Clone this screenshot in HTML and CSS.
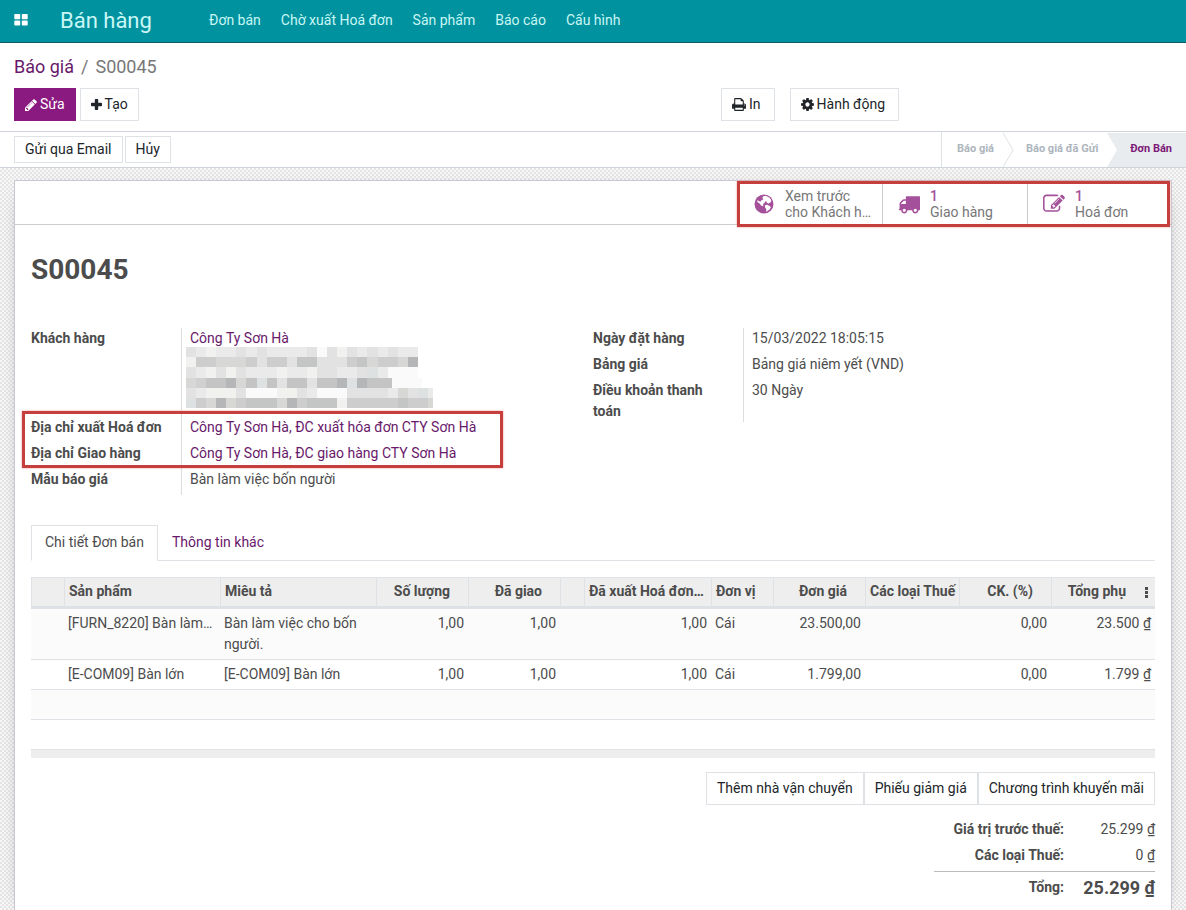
FILE: index.html
```html
<!DOCTYPE html>
<html lang="vi">
<head>
<meta charset="utf-8">
<title>S00045 - Bán hàng</title>
<link rel="stylesheet" href="styles.css">
</head>
<body>
<header class="navbar">
  <button class="apps" aria-label="Ứng dụng"><svg width="14" height="12" viewBox="0 0 14 12"><path fill="currentColor" d="M1 0h4.500a.7.700 0 0 1 .7.700v3.900a.7.700 0 0 1-.7.700H1a.7.700 0 0 1-.7-.7V.7A.7.700 0 0 1 1 0zm7.800 0h4.200a.7.700 0 0 1 .7.700v3.900a.7.700 0 0 1-.7.700H8.500a.7.700 0 0 1-.7-.7V.7a.7.700 0 0 1 .7-.7zM1 6.500h4.500a.7.700 0 0 1 .7.700v3.600a.7.700 0 0 1-.7.700H1a.7.700 0 0 1-.7-.7V7.200a.7.700 0 0 1 .7-.7zm7.800 0h4.200a.7.700 0 0 1 .7.700v3.600a.7.700 0 0 1-.7.700H8.500a.7.700 0 0 1-.7-.7V7.200a.7.700 0 0 1 .7-.7z"/></svg></button>
  <a class="brand" href="#">Bán hàng</a>
  <nav class="menu">
    <a href="#">Đơn bán</a><a href="#">Chờ xuất Hoá đơn</a><a href="#">Sản phẩm</a><a href="#">Báo cáo</a><a href="#">Cấu hình</a>
  </nav>
</header>
<section class="control-panel">
  <nav class="breadcrumb"><a href="#">Báo giá</a><span>/</span><span>S00045</span></nav>
  <div class="actions">
    <div class="actions-left">
      <button class="btn primary"><svg class="icon" width="12" height="14" viewBox="0 0 1536 1792"><path fill="currentColor" transform="matrix(1 0 0 -1 0 1536)" d="M363 0l91 91l-235 235l-91 -91v-107h128v-128h107zM886 928q0 22 -22 22q-10 0 -17 -7l-542 -542q-7 -7 -7 -17q0 -22 22 -22q10 0 17 7l542 542q7 7 7 17zM832 1120l416 -416l-832 -832h-416v416zM1515 1024q0 -53 -37 -90l-166 -166l-416 416l166 165q36 38 90 38q53 0 91 -38l235 -234q37 -39 37 -91z"/></svg>Sửa</button>
      <button class="btn"><svg class="icon" width="11" height="11" viewBox="0 0 11 11"><path fill="currentColor" d="M4.600 0h1.800q.8 0 .8.800v3h3q.8 0 .8.800v1.800q0 .8-.8.800h-3v3q0 .8-.8.800H4.600q-.8 0-.8-.8v-3h-3Q0 7.200 0 6.400V4.600q0-.8.800-.8h3v-3q0-.8.800-.8z"/></svg>Tạo</button>
    </div>
    <div class="actions-right">
      <button class="btn menu-btn"><svg class="icon" width="14" height="15" viewBox="0 0 1664 1792"><path fill="currentColor" transform="matrix(1 0 0 -1 0 1536)" d="M384 0h896v256h-896v-256zM384 640h896v384h-160q-40 0 -68 28t-28 68v160h-640v-640zM1536 576q0 26 -19 45t-45 19t-45 -19t-19 -45t19 -45t45 -19t45 19t19 45zM1664 576v-416q0 -13 -9.500 -22.500t-22.500 -9.500h-224v-160q0 -40 -28 -68t-68 -28h-960q-40 0 -68 28t-28 68v160h-224q-13 0 -22.500 9.500t-9.500 22.500v416q0 79 56.500 135.500t135.500 56.500h64v544q0 40 28 68t68 28h672q40 0 88 -20t76 -48l152 -152q28 -28 48 -76t20 -88v-256h64q79 0 135.500 -56.500t56.500 -135.500z"/></svg>In</button>
      <button class="btn menu-btn"><svg class="icon" width="13" height="15" viewBox="0 0 1536 1792"><path fill="currentColor" transform="matrix(1 0 0 -1 0 1536)" d="M1024 640q0 106 -75 181t-181 75t-181 -75t-75 -181t75 -181t181 -75t181 75t75 181zM1536 749v-222q0 -12 -8 -23t-20 -13l-185 -28q-19 -54 -39 -91q35 -50 107 -138q10 -12 10 -25t-9 -23q-27 -37 -99 -108t-94 -71q-12 0 -26 9l-138 108q-44 -23 -91 -38q-16 -136 -29 -186q-7 -28 -36 -28h-222q-14 0 -24.500 8.500t-11.500 21.500l-28 184q-49 16 -90 37l-141 -107q-10 -9 -25 -9q-14 0 -25 11q-126 114 -165 168q-7 10 -7 23q0 12 8 23q15 21 51 66.500t54 70.500q-27 50 -41 99l-183 27q-13 2 -21 12.500t-8 23.500v222q0 12 8 23t19 13l186 28q14 46 39 92q-40 57 -107 138q-10 12 -10 24q0 10 9 23q26 36 98.500 107.500t94.500 71.500q13 0 26 -10l138 -107q44 23 91 38q16 136 29 186q7 28 36 28h222q14 0 24.500 -8.500t11.500 -21.500l28 -184q49 -16 90 -37l142 107q9 9 24 9q13 0 25 -10q129 -119 165 -170q7 -8 7 -22q0 -12 -8 -23q-15 -21 -51 -66.500t-54 -70.500q26 -50 41 -98l183 -28q13 -2 21 -12.500t8 -23.500z"/></svg>Hành động</button>
    </div>
  </div>
</section>
<section class="statusbar">
  <div class="status-buttons"><button class="btn small">Gửi qua Email</button><button class="btn small">Hủy</button></div>
  <div class="stages">
    <button class="stage first">Báo giá</button>
    <svg width="12" height="34" viewBox="0 0 12 34"><path d="M1 0l10 17L1 34" fill="none" stroke="#dee2e6"/></svg>
    <button class="stage">Báo giá đã Gửi</button>
    <svg width="12" height="34" viewBox="0 0 12 34"><path d="M0 0h12v34H0l10-17z" fill="#e9ecef"/></svg>
    <button class="stage active">Đơn Bán</button>
  </div>
</section>
<main class="backdrop">
  <article class="sheet">
    <div class="button-box">
      <div class="stat-group">
        <button class="stat"><svg width="22" height="22" viewBox="0 0 22 22"><circle cx="11" cy="11" r="9.500" fill="currentColor"/><path fill="#fff" d="M9.800 3.400l3-.6 3.800 1.900 1.700 2.600-.6 1.900-2 1.400-1.600-.6-.9-1.700-1.300.5-.5 1.500-1.500.8.600 1.300-1 .8-1.600-.9-1.300-1.900L4.300 9l.3-2 1.500 1.300 1.600.3 1-1.500 1.700-.7-.9-1.500zM12 12.300l2-.5 2.700 1.300 1.200 1.200-1.300 2.200-1.900 1.300-1 1-.6-.3.300-2.200-1.300-1.800z"/></svg><span class="stat-text"><span>Xem trước</span><span>cho Khách h…</span></span></button>
        <button class="stat"><svg width="22" height="22" viewBox="0 0 1792 1792"><path fill="currentColor" fill-rule="evenodd" d="M640 1408q0-52-38-90t-90-38-90 38-38 90 38 90 90 38 90-38 38-90zM256 896h384V640H482q-13 0-22 9L265 844q-9 9-9 22zM1536 1408q0-52-38-90t-90-38-90 38-38 90 38 90 90 38 90-38 38-90zM1792 320v1024q0 15-4 26.500t-13.500 18.500-16.500 11.500-23.500 6-22.500 2-25.500 0-22.500-.5q0 106-75 181t-181 75-181-75-75-181H768q0 106-75 181t-181 75-181-75-75-181h-64q-3 0-22.500.5t-25.500 0-22.500-2-23.500-6-16.500-11.500-13.500-18.500-4-26.500q0-26 19-45t45-19V960q0-8-.5-35t0-38 2.500-34.500 6.500-37 14-30.500 22.500-30l198-198q19-19 50.500-32t58.500-13h160V320q0-26 19-45t45-19h1024q26 0 45 19t19 45z"/></svg><span class="stat-text"><span class="count">1</span><span>Giao hàng</span></span></button>
        <button class="stat"><svg width="22" height="22" viewBox="0 0 1792 1792"><path fill="currentColor" transform="matrix(1 0 0 -1 0 1536)" d="M888 352l116 116l-152 152l-116 -116v-56h96v-96h56zM1328 1072q-16 16 -33 -1l-350 -350q-17 -17 -1 -33t33 1l350 350q17 17 1 33zM1408 478v-190q0 -119 -84.500 -203.500t-203.500 -84.500h-832q-119 0 -203.500 84.500t-84.500 203.500v832q0 119 84.500 203.500t203.500 84.500h832q63 0 117 -25q15 -7 18 -23q3 -17 -9 -29l-49 -49q-14 -14 -32 -8q-23 6 -45 6h-832q-66 0 -113 -47t-47 -113v-832q0 -66 47 -113t113 -47h832q66 0 113 47t47 113v126q0 13 9 22l64 64q15 15 35 7t20 -29zM1312 1216l288 -288l-672 -672h-288v288zM1756 1084l-92 -92l-288 288l92 92q28 28 68 28t68 -28l152 -152q28 -28 28 -68t-28 -68z"/></svg><span class="stat-text"><span class="count">1</span><span>Hoá đơn</span></span></button>
      </div>
    </div>
    <div class="sheet-body">
      <h1 class="title">S00045</h1>
      <div class="groups">
        <dl class="fields">
          <dt>Khách hàng</dt><dd><a href="#">Công Ty Sơn Hà</a>
            <svg class="mosaic" width="247" height="61" viewBox="0 0 24.500 6" preserveAspectRatio="none" shape-rendering="crispEdges" aria-hidden="true">
              <path fill="#eaeaea" d="M0 0h23v1H0zM0 2h20v1H0zM0 4h24.500v1H0z"/>
              <path fill="#cdcdcd" d="M0 1h23v1H0zM0 5h24.500v1H0z"/>
              <path fill="#c4c4c4" d="M0 3h20.400v1H0z"/>
              <path stroke="#fafafa" d="M13 .5h1M20 2.500h3M20.400 3.500h3M6 4.500h3M13 4.500h3"/>
              <path stroke="#f1f1f0" d="M2 .5h1M15 .5h1M0 1.500h1M2 2.500h1M4 2.500h1M9 2.500h1M12 2.500h1M2 4.500h3M9 4.500h2M15 5.500h1"/>
              <path stroke="#e2e2e2" d="M0 .5h1M5 .5h1M7 .5h1M12 .5h1M14 .5h1M16 .5h1M18 .5h1M20 .5h1M7 1.500h1M10 1.500h1M13 1.500h3M0 2.500h1M3 2.500h1M5 2.500h1M13 2.500h2M17 2.500h1M9 3.500h1M12 3.500h1M0 4.500h1M5 4.500h1M11 4.500h1M16 4.500h4M22 4.500h1"/>
              <path stroke="#dde1e2" d="M18 2.500h1M7 3.500h1M16 3.500h1M0 5.500h1M23 4.500h1"/>
              <path stroke="#d7d7d6" d="M3 1.500h3M18 1.500h1M21 1.500h1M0 3.500h1M5 3.500h1M21 4.500h1M2 5.500h1M4 5.500h1M9 5.500h1M24 5.500h.5"/>
              <path stroke="#d0d0d0" d="M1 3.500h1"/>
              <path stroke="#c4c6c6" d="M11 1.500h2M17 1.500h1M6 5.500h3M12 5.500h3M21 5.500h1"/>
              <path stroke="#b5b6b7" d="M22 1.500h1M4 3.500h1M15 3.500h1M17 3.500h1M3 5.500h1M10 5.500h1"/>
            </svg></dd>
          <dt>Địa chỉ xuất Hoá đơn</dt><dd><a href="#">Công Ty Sơn Hà, ĐC xuất hóa đơn CTY Sơn Hà</a></dd>
          <dt>Địa chỉ Giao hàng</dt><dd><a href="#">Công Ty Sơn Hà, ĐC giao hàng CTY Sơn Hà</a></dd>
          <dt>Mẫu báo giá</dt><dd>Bàn làm việc bốn người</dd>
          <dd class="highlight" aria-hidden="true"></dd>
        </dl>
        <dl class="fields compact">
          <dt>Ngày đặt hàng</dt><dd>15/03/2022 18:05:15</dd>
          <dt>Bảng giá</dt><dd>Bảng giá niêm yết (VND)</dd>
          <dt>Điều khoản thanh toán</dt><dd>30 Ngày</dd>
        </dl>
      </div>
      <div class="tabs"><button class="tab active">Chi tiết Đơn bán</button><button class="tab">Thông tin khác</button></div>
      <table class="lines">
        <colgroup><col class="w33"><col class="w156"><col class="w156"><col class="w92"><col class="w92"><col class="w24"><col class="w127"><col class="w62"><col class="w92"><col class="w94"><col class="w92"><col class="w88"><col class="w16"></colgroup>
        <thead><tr><th></th><th>Sản phẩm</th><th>Miêu tả</th><th class="num">Số lượng</th><th class="num">Đã giao</th><th></th><th>Đã xuất Hoá đơn…</th><th>Đơn vị</th><th class="num">Đơn giá</th><th>Các loại Thuế</th><th class="num">CK. (%)</th><th class="num last">Tổng phụ</th><th class="more"><button aria-label="Tùy chọn cột"><svg width="4" height="11" viewBox="0 0 4 11"><path fill="currentColor" d="M0 0h3v3H0zM0 4h3v3H0zM0 8h3v3H0z"/></svg></button></th></tr></thead>
        <tbody>
          <tr><td></td><td class="clip">[FURN_8220] Bàn làm…</td><td>Bàn làm việc cho bốn người.</td><td class="num">1,00</td><td class="num">1,00</td><td></td><td class="num">1,00</td><td>Cái</td><td class="num">23.500,00</td><td></td><td class="num">0,00</td><td class="num" colspan="2">23.500 ₫</td></tr>
          <tr><td></td><td class="clip">[E-COM09] Bàn lớn</td><td>[E-COM09] Bàn lớn</td><td class="num">1,00</td><td class="num">1,00</td><td></td><td class="num">1,00</td><td>Cái</td><td class="num">1.799,00</td><td></td><td class="num">0,00</td><td class="num" colspan="2">1.799 ₫</td></tr>
          <tr><td colspan="13">&nbsp;</td></tr>
          <tr><td colspan="13">&nbsp;</td></tr>
        </tbody>
        <tfoot><tr><td colspan="13"></td></tr></tfoot>
      </table>
      <div class="extra"><button class="btn">Thêm nhà vận chuyển</button><button class="btn">Phiếu giảm giá</button><button class="btn">Chương trình khuyến mãi</button></div>
      <table class="totals">
        <tr><th scope="row">Giá trị trước thuế:</th><td>25.299 ₫</td></tr>
        <tr><th scope="row">Các loại Thuế:</th><td>0 ₫</td></tr>
        <tr class="grand"><th scope="row">Tổng:</th><td>25.299 ₫</td></tr>
      </table>
    </div>
  </article>
</main>
</body>
</html>
```

FILE: styles.css
```css
* { box-sizing: border-box; }
body { margin: 0; font: 14px/21px Roboto, "Noto Sans", sans-serif; color: #4c4c4c; background: #fff; }
button { font: inherit; color: inherit; background: none; border: 0; padding: 0; margin: 0; cursor: pointer; }
a { color: #68196a; text-decoration: none; }
.navbar { display: flex; align-items: center; height: 43px; padding: 0 14px 2px; background: #00929f; border-bottom: 1px solid #0b5c68; color: #c9f7f5; }
.navbar a { color: inherit; }
.apps { display: flex; color: #fff; width: 46px; }
.brand { font-size: 22px; width: 149px; }
.menu { display: flex; gap: 20px; }
.control-panel { padding: 12px 14px 10px; border-bottom: 1px solid #ced4da; }
.breadcrumb { display: flex; gap: 7px; font-size: 18px; line-height: 24px; color: #777; }
.actions { display: flex; margin-top: 9px; }
.actions-left { display: flex; gap: 4px; flex: 707; }
.actions-right { display: flex; gap: 15px; flex: 451; }
.btn { display: inline-flex; align-items: center; gap: 3px; height: 33px; padding: 0 10px; border: 1px solid #dee2e6; background: #fff; color: #212529; white-space: nowrap; }
.primary { background: #8a1a80; border-color: #8a1a80; color: #fff; }
.menu-btn { padding-right: 13px; }
.small { height: 27px; }
.icon { flex: none; }
.statusbar { display: flex; justify-content: space-between; height: 36px; border-bottom: 1px solid #ced4da; }
.status-buttons { display: flex; align-items: center; gap: 2px; padding-left: 14px; }
.stages { display: flex; font-size: 11px; font-weight: 700; color: #adb5bd; border-left: 1px solid #dee2e6; padding-top: 1px; }
.stage { padding: 0 9px 4px 12px; }
.stage.first { padding: 0 8px 4px 15px; }
.stage.active { background: #e9ecef; color: #7c1a78; padding: 0 14px 4px 11px; }
.backdrop { padding: 12px 14px 0; background: repeating-conic-gradient(#e5e5e5 0 25%, #f7f7f7 0 50%) 0 0 / 4px 4px; }
.sheet { background: #fff; border: 1px solid #c8c8d3; border-bottom: 0; box-shadow: 0 5px 20px -15px #000; min-height: 730px; }
.button-box { display: flex; justify-content: flex-end; height: 44px; border-bottom: 1px solid #ccc; }
.stat-group { position: relative; display: flex; }
.stat-group::after, .highlight { content: ""; position: absolute; border: 3px solid #c5403d; box-shadow: 0 0 2px #e99; pointer-events: none; }
.stat-group::after { inset: 0 1px -3px 0; }
.stat { display: flex; align-items: center; gap: 10px; width: 145px; padding: 3px 8px 0 15px; color: #a4509a; border-left: 1px solid #ccc; text-align: left; line-height: 16px; }
.stat:last-child { width: 144px; }
.stat svg { flex: none; }
.stat-text { display: flex; flex-direction: column; min-width: 0; color: #777; white-space: nowrap; }
.stat-text .count { color: #a4509a; font-weight: 500; }
.sheet-body { padding: 25px 16px 0; }
.title { margin: 0; font-size: 28px; line-height: 40px; font-weight: 700; }
.groups { display: grid; grid-template-columns: 1fr 1fr; margin-top: 38px; align-items: start; }
.fields { position: relative; display: grid; grid-template-columns: 150px 1fr; margin: 0; }
.fields dt { font-weight: 700; padding-bottom: 5px; padding-right: 12px; }
.fields dd { margin: 0; border-left: 1px solid #ddd; padding: 0 0 5px 8px; }
.compact dt:last-of-type { padding-bottom: 0; }
.mosaic { display: block; margin: -2px 0 4px -4px; }
.fields .highlight { left: -9px; top: 83px; width: 481px; height: 57px; border-left: 3px solid #c5403d; }
.tabs { display: flex; margin-top: 30px; border-bottom: 1px solid #dee2e6; }
.tab { margin-bottom: -1px; padding: 6px 13px 7px; border: 1px solid transparent; color: #68196a; }
.tab.active { border-color: #dee2e6; border-bottom-color: #fff; color: #4c4c4c; background: #fff; }
.lines { width: 100%; margin-top: 16px; table-layout: fixed; border-collapse: separate; border-spacing: 0; }
.w33 { width: 33px; } .w156 { width: 156px; } .w92 { width: 92px; } .w24 { width: 24px; } .w127 { width: 127px; } .w62 { width: 62px; } .w94 { width: 94px; } .w88 { width: 88px; } .w16 { width: 16px; }
.lines th { height: 32px; padding: 3px 0 4px 4px; font-weight: 700; text-align: left; background: #eee; border-left: 1px solid #dee2e6; border-top: 1px solid #dee2e6; border-bottom: 3px solid #dee2e6; white-space: nowrap; }
.lines td { padding: 4px; vertical-align: top; border-bottom: 1px solid #dee2e6; }
.lines .num { text-align: right; }
.lines th.num { padding-right: 18px; }
.lines th.last { padding-right: 13px; }
.lines th.more { border-left: 0; padding: 0; text-align: center; }
.more button { display: inline-flex; vertical-align: middle; }
.lines .clip { white-space: nowrap; }
.lines tbody tr:nth-child(odd) { background: #fbfbfb; }
.lines tfoot td { height: 8px; padding: 0; background: #eee; border: 0; }
.extra { display: flex; justify-content: flex-end; margin-top: 14px; }
.totals { margin: 14px 0 0 auto; border-collapse: collapse; width: 221px; }
.totals th { font-weight: 700; text-align: right; padding: 0 0 5px; width: 130px; }
.totals td { text-align: right; padding: 0 0 5px; }
.grand { border-top: 1px solid #bbb; }
.totals .grand td { font-size: 18px; font-weight: 700; padding-top: 4px; }
.totals .grand th { padding-top: 5px; }
```
